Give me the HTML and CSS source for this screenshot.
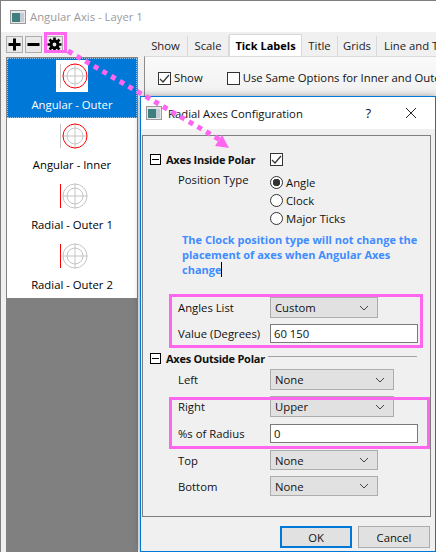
FILE: index.html
```html
<!doctype html>
<html>

<head>
  <title>Radial Axes Configuration</title>
  <meta charset="utf-8">
  <link rel="stylesheet" href="styles.css">
</head>

<body>
  <svg class="defs" width="0" height="0">
    <symbol id="polar" viewBox="0 0 32 32">
      <circle class="ring-in" cx="19" cy="16" r="8"></circle>
      <path class="cross" d="M19 3.500V28.500M6.500 16H31.500"></path>
    </symbol>
    <symbol id="winicon" viewBox="0 0 16 14">
      <rect x="0.500" y="0.500" width="15" height="13" fill="#e8e8e8" stroke="#9a9a9a"></rect>
      <rect x="2" y="3" width="8" height="9" fill="#3f7f7f"></rect>
      <rect x="10" y="3" width="4" height="9" fill="#c4ccd4"></rect>
    </symbol>
  </svg>

  <div class="parent">
    <div class="parent-title">
      <svg class="winicon" width="16" height="14"><use href="#winicon"></use></svg>
      <span>Angular Axis - Layer 1</span>
    </div>
    <div class="parent-body">
      <div class="side">
        <div class="toolbar">
          <div class="tool">
            <svg width="15" height="15" viewBox="0 0 15 15"><path d="M7.500 1.500v12M1.500 7.500h12" stroke="#000" stroke-width="3"></path></svg>
          </div>
          <div class="tool">
            <svg width="15" height="15" viewBox="0 0 15 15"><path d="M1.500 7.500h12" stroke="#000" stroke-width="3"></path></svg>
          </div>
          <div class="tool tool-gear">
            <svg width="15" height="15" viewBox="0 0 15 15">
              <path d="M7.500 0.500v14M0.500 7.500h14M2.500 2.500l10 10M12.500 2.500l-10 10" stroke="#000" stroke-width="2.600"></path>
              <circle cx="7.500" cy="7.500" r="3.400" fill="#e9e9e9" stroke="#000" stroke-width="3"></circle>
            </svg>
          </div>
        </div>
        <div class="axis-list">
          <div class="axis-item selected">
            <svg class="axis-icon" width="32" height="32" viewBox="0 0 32 32">
              <path class="line-off" d="M4.500 4V28"></path>
              <use href="#polar"></use>
              <circle class="ring-on" cx="19" cy="16" r="12"></circle>
            </svg>
            <div>Angular - Outer</div>
          </div>
          <div class="axis-item">
            <svg class="axis-icon" width="32" height="32" viewBox="0 0 32 32">
              <path class="line-off" d="M4.500 4V28"></path>
              <use href="#polar"></use>
              <circle class="ring-on" cx="19" cy="16" r="12"></circle>
            </svg>
            <div>Angular - Inner</div>
          </div>
          <div class="axis-item">
            <svg class="axis-icon" width="32" height="32" viewBox="0 0 32 32">
              <path class="line-on" d="M4.500 4V28"></path>
              <use href="#polar"></use>
              <circle class="ring-off" cx="19" cy="16" r="12"></circle>
            </svg>
            <div>Radial - Outer 1</div>
          </div>
          <div class="axis-item">
            <svg class="axis-icon" width="32" height="32" viewBox="0 0 32 32">
              <path class="line-on" d="M4.500 4V28"></path>
              <use href="#polar"></use>
              <circle class="ring-off" cx="19" cy="16" r="12"></circle>
            </svg>
            <div>Radial - Outer 2</div>
          </div>
          <div class="axis-rest"></div>
        </div>
      </div>
      <div class="tabs-side">
        <div class="tabs">
          <span class="tab tab-show">Show</span>
          <span class="tab tab-scale">Scale</span>
          <span class="tab active">Tick Labels</span>
          <span class="tab tab-title">Title</span>
          <span class="tab tab-grids">Grids</span>
          <span class="tab tab-line">Line and Ticks</span>
        </div>
        <div class="pane">
          <span class="check checked"><svg width="11" height="11" viewBox="0 0 11 11"><path d="M1 6l3 3 6-7" fill="none" stroke="#333" stroke-width="1.200"></path></svg></span>
          <span class="pane-show">Show</span>
          <span class="check"></span>
          <span class="pane-same">Use Same Options for Inner and Outer</span>
        </div>
      </div>
    </div>
  </div>

  <!-- dialog sits on top of the parent window -->
  <div class="dialog">
    <div class="dialog-title">
      <svg class="winicon" width="16" height="14"><use href="#winicon"></use></svg>
      <span class="dialog-name">Radial Axes Configuration</span>
      <span class="help">?</span>
      <svg class="close" width="12" height="12" viewBox="0 0 12 12"><path d="M1 1l10 10M11 1L1 11" stroke="#222" stroke-width="1"></path></svg>
    </div>

    <div class="frame">
      <div class="head head-inside">
        <span class="box-minus"></span>
        <b>Axes Inside Polar</b>
        <span class="check checked"><svg width="11" height="11" viewBox="0 0 11 11"><path d="M1 6l3 3 6-7" fill="none" stroke="#333" stroke-width="1.200"></path></svg></span>
      </div>

      <div class="row position">
        <span class="label">Position Type</span>
        <div class="radios">
          <div class="radio-row"><span class="radio on"></span>Angle</div>
          <div class="radio-row"><span class="radio"></span>Clock</div>
          <div class="radio-row"><span class="radio"></span>Major Ticks</div>
        </div>
      </div>

      <div class="note">The Clock position type will not change the placement of axes when Angular Axes change<span class="caret"></span></div>

      <div class="row r-angles">
        <span class="label">Angles List</span>
        <div class="combo w-short">Custom<svg width="10" height="6" viewBox="0 0 10 6"><path d="M1 1l4 4 4-4" fill="none" stroke="#444"></path></svg></div>
      </div>
      <div class="row r-value">
        <span class="label">Value (Degrees)</span>
        <input class="field" value="60 150">
      </div>

      <div class="head head-outside">
        <span class="box-minus"></span>
        <b>Axes Outside Polar</b>
        <span class="head-line"></span>
      </div>

      <div class="row r-left">
        <span class="label">Left</span>
        <div class="combo w-long">None<svg width="10" height="6" viewBox="0 0 10 6"><path d="M1 1l4 4 4-4" fill="none" stroke="#444"></path></svg></div>
      </div>
      <div class="row r-right">
        <span class="label">Right</span>
        <div class="combo w-long">Upper<svg width="10" height="6" viewBox="0 0 10 6"><path d="M1 1l4 4 4-4" fill="none" stroke="#444"></path></svg></div>
      </div>
      <div class="row r-radius">
        <span class="label">%s of Radius</span>
        <input class="field" value="0">
      </div>
      <div class="row r-top">
        <span class="label">Top</span>
        <div class="combo w-short">None<svg width="10" height="6" viewBox="0 0 10 6"><path d="M1 1l4 4 4-4" fill="none" stroke="#444"></path></svg></div>
      </div>
      <div class="row r-bottom">
        <span class="label">Bottom</span>
        <div class="combo w-short">None<svg width="10" height="6" viewBox="0 0 10 6"><path d="M1 1l4 4 4-4" fill="none" stroke="#444"></path></svg></div>
      </div>
    </div>

    <div class="footer">
      <div class="btn btn-ok">OK</div>
      <div class="btn">Cancel</div>
    </div>
  </div>

  <!-- pink annotations drawn over the screenshot -->
  <svg class="marks" width="436" height="552" viewBox="0 0 436 552">
    <rect class="mark" x="45.500" y="33.500" width="20" height="18"></rect>
    <rect class="mark" x="170.500" y="295.500" width="251" height="51"></rect>
    <rect class="mark" x="170.500" y="398.500" width="258" height="49"></rect>
    <path class="dots" d="M68 51L222 141"></path>
    <path class="arrow" d="M229 148L222 135L215 146Z"></path>
  </svg>
</body>

</html>
```

FILE: styles.css
```css
* {
  box-sizing: border-box;
}

body {
  margin: 0;
  width: 436px;
  height: 552px;
  overflow: hidden;
  position: relative;
  background-color: #f0f0f0;
  color: #111;
  font-family: "Open Sans", "Noto Sans", sans-serif;
  font-size: 11.300px;
}

.defs {
  position: absolute;
}

.ring-in,
.ring-off,
.cross {
  fill: none;
  stroke: #c4c4c4;
}

.ring-on {
  fill: none;
  stroke: #f00;
}

.line-off {
  stroke: #c4c4c4;
}

.line-on {
  stroke: #f00;
}

/* parent window */
.parent {
  height: 552px;
  display: flex;
  flex-direction: column;
  border-top: 1px solid #7f7f7f;
  border-left: 1px solid #7f7f7f;
}

.parent-title {
  height: 31px;
  flex: none;
  display: flex;
  align-items: center;
  gap: 4px;
  padding-left: 9px;
  background-color: #fff;
  color: #9b9b9b;
}

.parent-body {
  flex: 1;
  display: flex;
  min-height: 0;
}

.side {
  width: 143px;
  flex: none;
  display: flex;
  flex-direction: column;
  padding-left: 5px;
}

.toolbar {
  display: flex;
  gap: 2px;
  margin-top: 4px;
  height: 17px;
}

.tool {
  width: 17px;
  height: 17px;
  display: flex;
  align-items: center;
  justify-content: center;
  border: 1px solid #adadad;
  background-color: #e9e9e9;
}

.tool-gear {
  margin-left: 2px;
}

.axis-list {
  flex: 1;
  width: 132px;
  margin-top: 4px;
  display: flex;
  flex-direction: column;
  border: 1px solid #828282;
  border-bottom: 0;
  background-color: #fff;
}

.axis-item {
  height: 60px;
  flex: none;
  display: flex;
  flex-direction: column;
  align-items: center;
  padding-top: 2px;
  gap: 5px;
  text-align: center;
  color: #000;
}

.axis-item.selected {
  background-color: #0078d7;
  color: #fff;
  outline: 1px dotted #9cc8ee;
  outline-offset: -1px;
}

.axis-icon {
  background-color: #fff;
}

.axis-rest {
  flex: 1;
  background-color: #808080;
}

.tabs-side {
  flex: 1;
  display: flex;
  flex-direction: column;
  min-width: 0;
}

.tabs {
  display: flex;
  height: 24px;
  flex: none;
  align-items: flex-end;
  white-space: nowrap;
  overflow: hidden;
}

.tab {
  height: 20px;
  line-height: 19px;
  flex: none;
  text-align: center;
  background-color: #f0f0f0;
  border-right: 1px solid #d9d9d9;
  color: #222;
}

.tab-show {
  width: 44px;
}

.tab-scale {
  width: 41px;
}

.tab.active {
  width: 73px;
  height: 22px;
  line-height: 21px;
  background-color: #fff;
  border: 1px solid #d9d9d9;
  border-bottom: 0;
  font-size: 11px;
  font-weight: 700;
  color: #000;
}

.tab-title {
  width: 36px;
}

.tab-grids {
  width: 39px;
}

.tab-line {
  padding-left: 7px;
  border-right: 0;
}

.pane {
  flex: 1;
  display: flex;
  align-items: flex-start;
  padding: 15px 0 0 13px;
  border-left: 1px solid #8c8c8c;
  border-top: 1px solid #d9d9d9;
  background: linear-gradient(#fafafa, #f0f0f0 40px);
  white-space: nowrap;
}

.pane-show {
  margin: -2px 24px 0 3px;
}

.pane-same {
  margin: -2px 0 0 3px;
}

.check {
  width: 13px;
  height: 13px;
  flex: none;
  display: inline-flex;
  align-items: center;
  justify-content: center;
  border: 1px solid #333;
  background-color: #fff;
}

/* dialog */
.dialog {
  position: absolute;
  left: 140px;
  top: 96px;
  width: 296px;
  height: 456px;
  border: 1px solid #0078d7;
  background-color: #f0f0f0;
  box-shadow: 0 0 7px rgba(0, 0, 0, 0.35);
}

.dialog-title {
  height: 32px;
  display: flex;
  align-items: center;
  padding: 0 18px 0 5px;
  background-color: #fff;
  color: #111;
}

.dialog-name {
  margin-left: 6px;
  flex: 1;
}

.help {
  margin-right: 34px;
  font-size: 13px;
}

.frame {
  width: 289px;
  height: 382px;
  margin: 6px 0 0 1px;
  padding-top: 15px;
  border: 1px solid #7f7f7f;
}

.head {
  height: 16px;
  display: flex;
  align-items: center;
  padding-left: 7px;
}

.head b {
  margin-left: 5px;
  font-size: 11px;
  letter-spacing: -0.25px;
}

.head-inside b {
  width: 104px;
}

.box-minus {
  width: 11px;
  height: 11px;
  flex: none;
  border: 1px solid #000;
  background: linear-gradient(#000, #000) center / 7px 1px no-repeat #fff;
}

.head-outside {
  margin-top: 7px;
}

.head-line {
  flex: 1;
  height: 1px;
  margin: -3px 13px 0 3px;
  background-color: #a0a0a0;
}

.row {
  display: flex;
  align-items: center;
  padding-left: 35px;
}

.label {
  width: 92px;
  flex: none;
}

.position {
  align-items: flex-start;
  margin-top: 6px;
}

.position .label {
  line-height: 14px;
}

.radio-row {
  height: 18px;
  display: flex;
  align-items: center;
  gap: 3px;
}

.radio {
  width: 13px;
  height: 13px;
  border: 1px solid #333;
  border-radius: 50%;
  background-color: #fff;
}

.radio.on {
  background: radial-gradient(circle, #333 3.5px, #fff 4px);
}

.note {
  width: 246px;
  margin: 5px 0 0 39px;
  color: #3f8cff;
  font-size: 11px;
  font-weight: 700;
  line-height: 15px;
}

.caret {
  display: inline-block;
  width: 1px;
  height: 15px;
  vertical-align: top;
  background-color: #000;
}

.combo {
  height: 21px;
  display: flex;
  align-items: center;
  justify-content: space-between;
  padding: 0 8px 0 4px;
  border: 1px solid #adadad;
  background-color: #e1e1e1;
}

.w-short {
  width: 108px;
}

.w-long {
  width: 124px;
}

.r-top .combo,
.r-bottom .combo {
  height: 20px;
}

.field {
  width: 148px;
  height: 19px;
  padding: 0 3px;
  border: 1px solid #7a7a7a;
  background-color: #fff;
  color: #111;
  font: inherit;
}

.r-angles {
  margin-top: 20px;
}

.r-value {
  margin-top: 6px;
}

.r-left {
  margin-top: 3px;
}

.r-right {
  margin-top: 6px;
}

.r-radius {
  margin-top: 7px;
}

.r-top {
  margin-top: 7px;
}

.r-bottom {
  margin-top: 6px;
}

.footer {
  display: flex;
  justify-content: flex-end;
  gap: 6px;
  margin-top: 9px;
  padding-right: 5px;
}

.btn {
  width: 72px;
  height: 22px;
  display: flex;
  align-items: center;
  justify-content: center;
  border: 1px solid #adadad;
  background-color: #e1e1e1;
}

.btn-ok {
  border: 2px solid #0078d7;
}

/* annotations */
.marks {
  position: absolute;
  left: 0;
  top: 0;
}

.mark {
  fill: none;
  stroke: #ff66f0;
  stroke-width: 3;
}

.dots {
  fill: none;
  stroke: #ff66f0;
  stroke-width: 5;
  stroke-dasharray: 5 5;
}

.arrow {
  fill: #ff66f0;
}
```
